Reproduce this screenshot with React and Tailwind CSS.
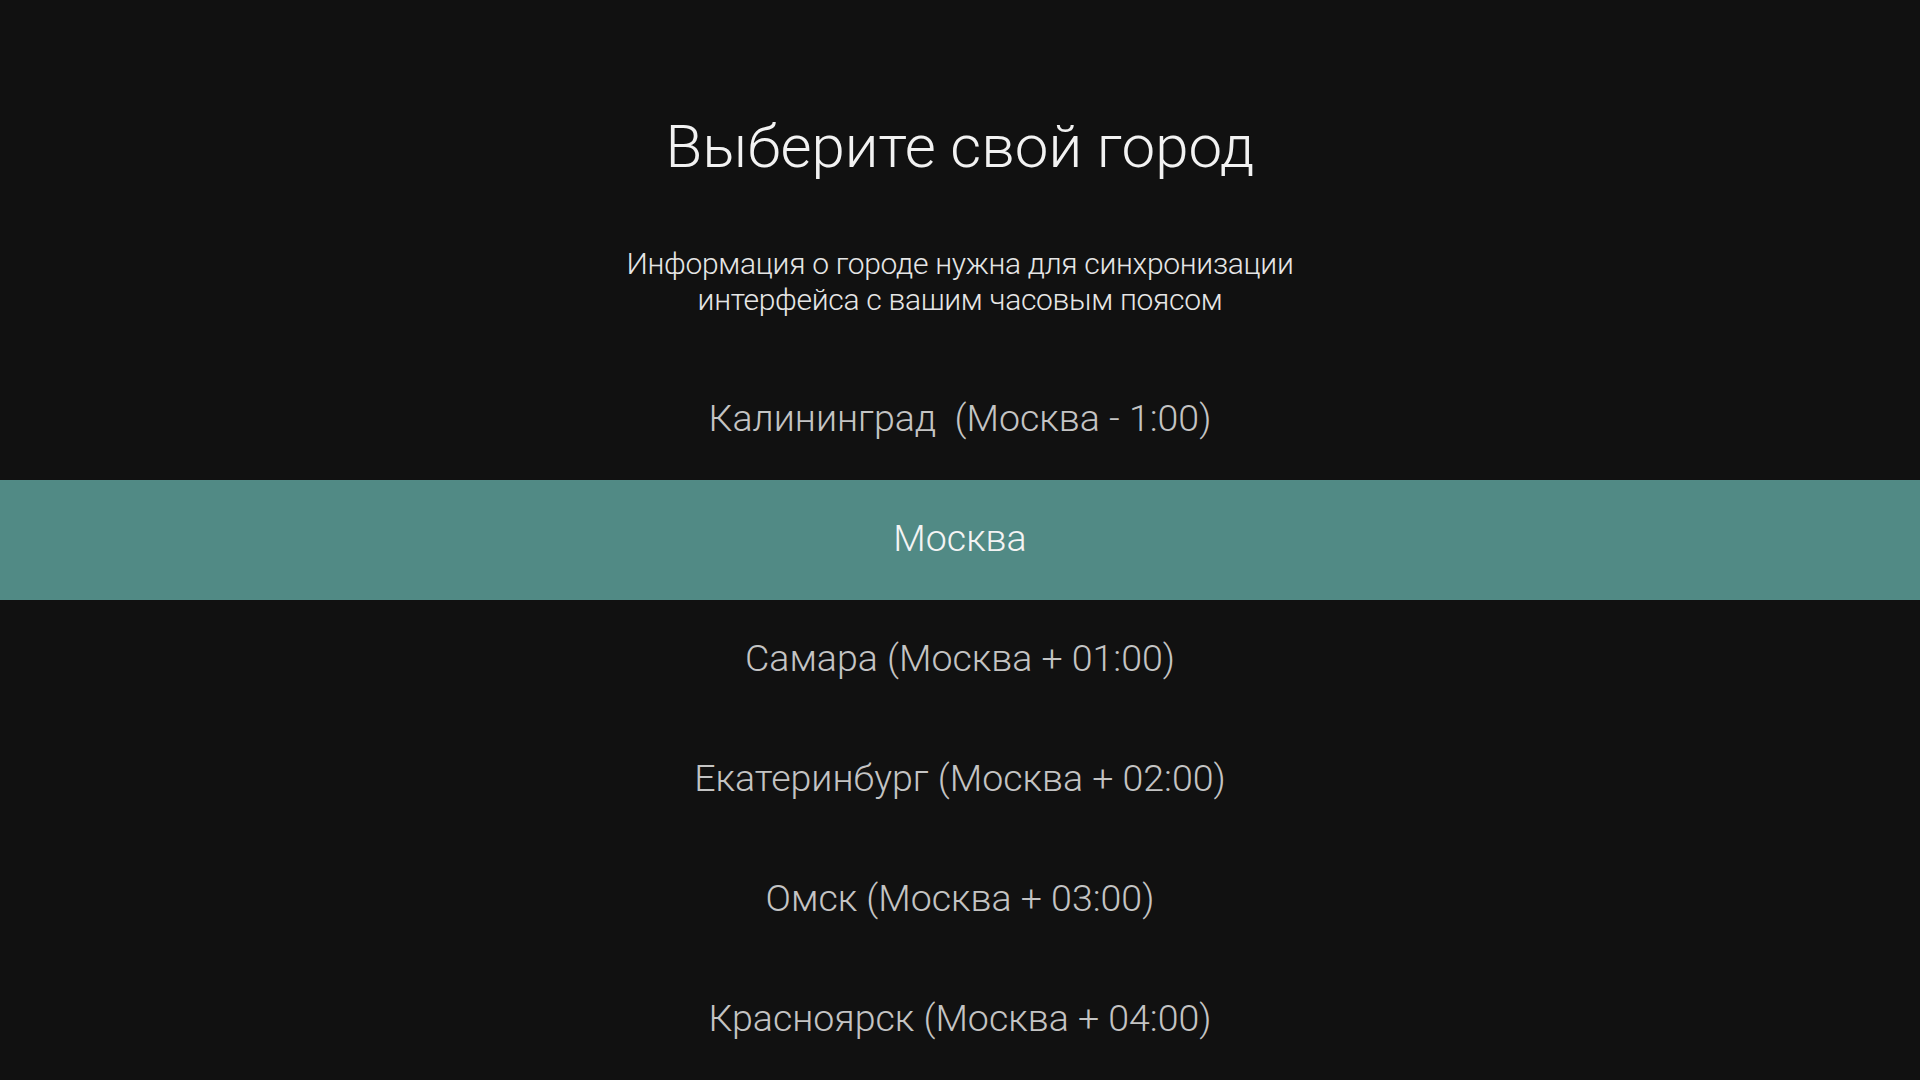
const cities = [
  'Калининград  (Москва - 1:00)',
  'Москва',
  'Самара (Москва + 01:00)',
  'Екатеринбург (Москва + 02:00)',
  'Омск (Москва + 03:00)',
  'Красноярск (Москва + 04:00)',
];

export default function App() {
  const selected = 1;

  return (
    <div className="h-[1080px] w-full overflow-hidden bg-[#111111] font-['Roboto',sans-serif] font-light">
      {/* Header */}
      <div className="pt-[107px] text-center">
        <h1 className="text-[60px] leading-[80px] text-[#f2f2f2] font-light">Выберите свой город</h1>
        <p className="mt-[59px] text-[30px] leading-[36px] tracking-[-0.3px] text-[#e6e6e6] whitespace-pre-line">
          {'Информация о городе нужна для синхронизации\nинтерфейса с вашим часовым поясом'}
        </p>
      </div>

      {/* City list */}
      <div className="mt-[42px] flex flex-col">
        {cities.map((city, i) => (
          <div
            key={city}
            className={
              i === selected
                ? 'h-[120px] pb-[4px] flex items-center justify-center bg-[#518a85] text-[37.5px] text-[#f4f4f4] whitespace-pre'
                : 'h-[120px] pb-[4px] flex items-center justify-center text-[37.5px] text-[#c4c4c4] whitespace-pre'
            }
          >
            {city}
          </div>
        ))}
      </div>
    </div>
  );
}
